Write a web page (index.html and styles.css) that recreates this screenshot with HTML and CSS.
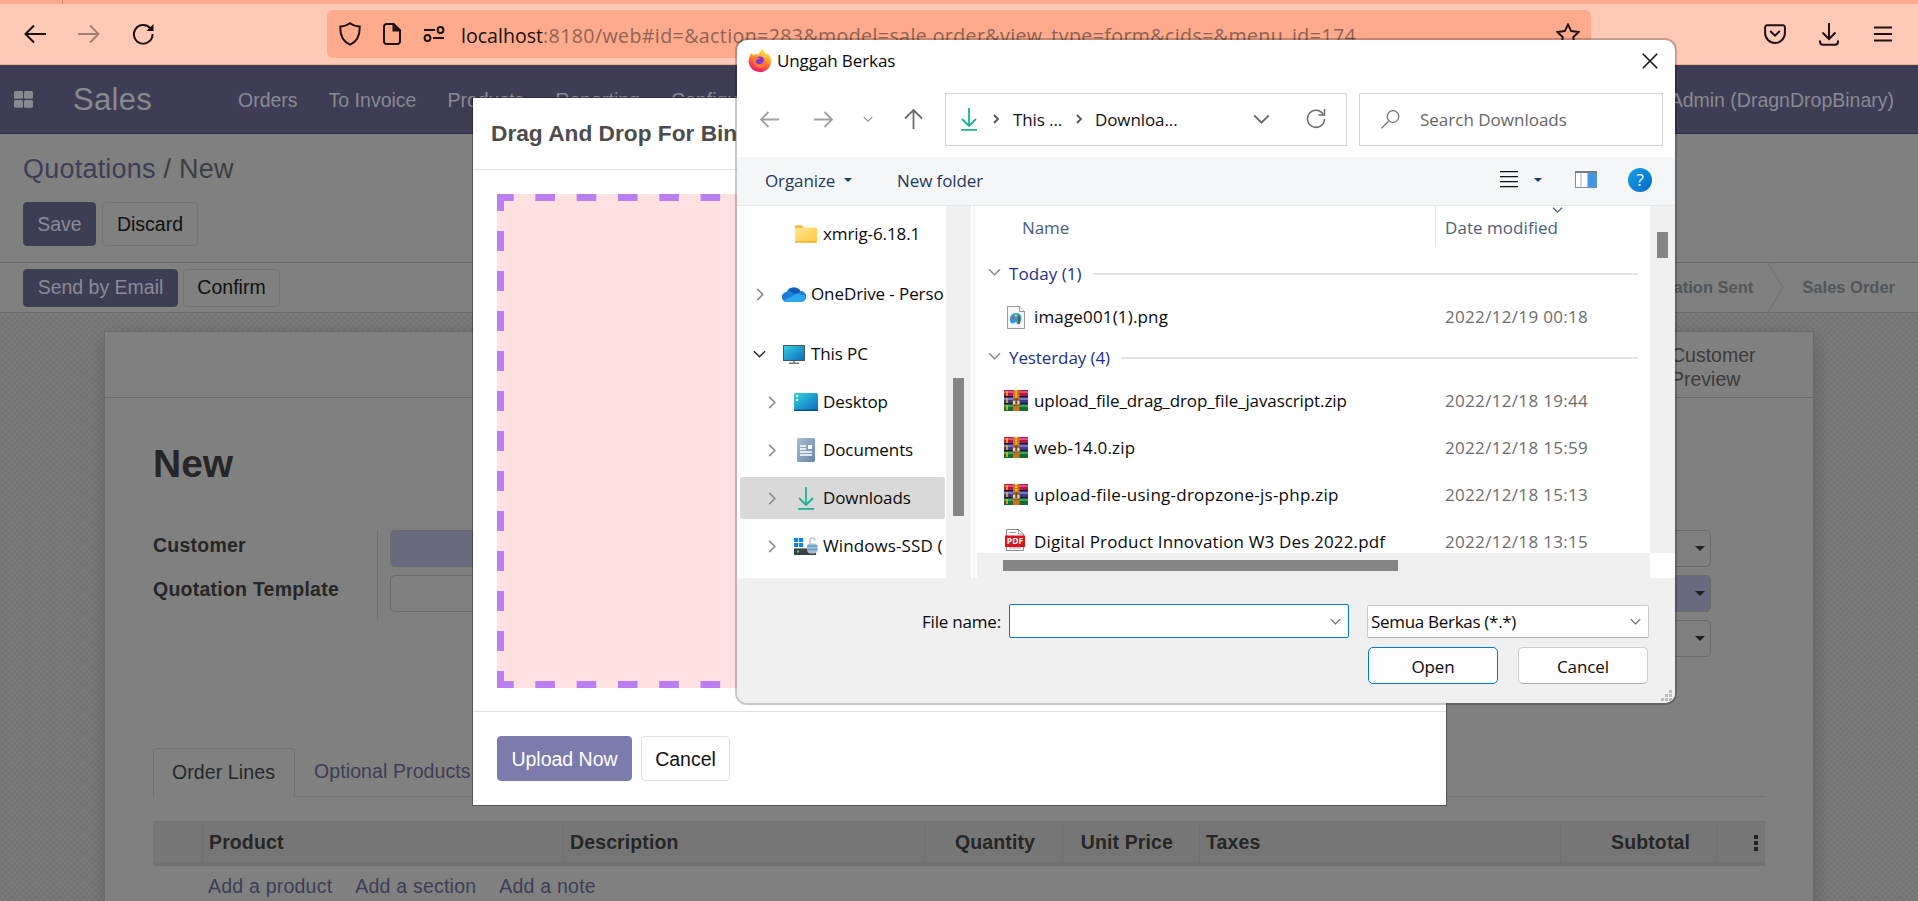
FILE: index.html
```html
<!DOCTYPE html>
<html lang="id">
<head>
<meta charset="utf-8">
<title>Quotations - New</title>
<link rel="stylesheet" href="styles.css">
</head>
<body>
<svg width="0" height="0" class="defs" aria-hidden="true">
  <defs>
    <linearGradient id="gTeal" x1="0" y1="0" x2="1" y2="1"><stop offset="0" stop-color="#35d3e0"/><stop offset="1" stop-color="#0a68bd"/></linearGradient>
    <linearGradient id="gFolder" x1="0" y1="0" x2="1" y2="1"><stop offset="0" stop-color="#ffe591"/><stop offset="1" stop-color="#ffc93c"/></linearGradient>
    <linearGradient id="gDoc" x1="0" y1="0" x2="1" y2="1"><stop offset="0" stop-color="#a9bdd3"/><stop offset="1" stop-color="#6a87a8"/></linearGradient>
    <linearGradient id="gFox" x1="0.75" y1="0" x2="0.35" y2="1"><stop offset="0" stop-color="#fff04a"/><stop offset="0.4" stop-color="#ffa436"/><stop offset="0.65" stop-color="#ff5a36"/><stop offset="1" stop-color="#e8127a"/></linearGradient>
    <symbol id="right" viewBox="0 0 8 14"><path d="M1 1l6 6-6 6" fill="none" stroke="currentColor" stroke-width="1.7"/></symbol>
    <symbol id="down" viewBox="0 0 14 8"><path d="M1 1l6 6 6-6" fill="none" stroke="currentColor" stroke-width="1.5"/></symbol>
    <symbol id="download" viewBox="0 0 16 23"><path d="M8 0v17M1 11l7 7 7-7M0 21.8h16" fill="none" stroke="#1bb394" stroke-width="1.8"/></symbol>
    <symbol id="rar" viewBox="0 0 24 22">
      <rect width="24" height="7" y="0" fill="#b5193f"/><rect width="24" height="2" y="1" fill="#e0527a"/>
      <rect width="24" height="7" y="7" fill="#3b3a8e"/><rect width="24" height="2" y="8" fill="#7b78c8"/>
      <rect width="24" height="7" y="14" fill="#16692f"/><rect width="24" height="2" y="15" fill="#3fa45a"/>
      <path d="M0 6.5h24M0 13.5h24" stroke="#1b1230"/><path d="M3 1v5M3 8v5M3 15v5" stroke="#f0b428" stroke-width="1.6"/>
      <rect x="9" width="6.500" height="21" fill="#c8741a"/><path d="M12.200 0v9" stroke="#ffd34d" stroke-width="2" stroke-dasharray="1.500 1"/>
      <rect x="8.500" y="10" width="7.500" height="5" rx="1" fill="#d9d9d9" stroke="#6b3d1a"/><rect x="11.300" y="8" width="2" height="6" fill="#7b4419"/>
    </symbol>
  </defs>
</svg>
<div class="screen">
  <div class="tabstrip"><i></i></div>
  <div class="browser-bar">
    <svg class="ic back" width="22" height="20" viewBox="0 0 22 20"><path d="M22 10H1.500M10 1.500L1.500 10l8.500 8.500" /></svg>
    <svg class="ic fwd" width="22" height="20" viewBox="0 0 22 20"><path d="M0 10h20.500M12 1.500l8.500 8.500-8.500 8.500"/></svg>
    <svg class="ic reload" width="22" height="22" viewBox="0 0 22 22"><path d="M18 5A9.300 9.300 0 1 0 20.500 11"/><path d="M21.500 1v7h-7z" fill="#1c1310" stroke="none"/></svg>
    <div class="urlbar">
      <svg class="ic shield" width="22" height="24" viewBox="0 0 22 24"><path d="M11 1.200C8 3.500 4.500 4.200 1.300 4.500 1 13 3.500 19.500 11 22.700 18.500 19.500 21 13 20.700 4.500 17.500 4.200 14 3.500 11 1.200z"/></svg>
      <svg class="ic page" width="18" height="22" viewBox="0 0 18 22"><path d="M10.500 1H3.500A2.500 2.500 0 0 0 1 3.500v15A2.500 2.500 0 0 0 3.500 21h11a2.500 2.500 0 0 0 2.500-2.500V7.500z"/><path d="M10.500 1v6.500H17z" fill="#2a1a15"/></svg>
      <svg class="ic sliders" width="22" height="16" viewBox="0 0 22 16"><path d="M1 4h11M10 12h11"/><circle cx="17.500" cy="4" r="2.900"/><circle cx="4.500" cy="12" r="2.900"/></svg>
      <div class="url"><b>localhost</b>:8180/web#id=&amp;action=283&amp;model=sale.order&amp;view_type=form&amp;cids=&amp;menu_id=174</div>
      <svg class="ic star" width="24" height="23" viewBox="0 0 24 23"><path d="M12 1.500l3.200 6.600 7.200 1-5.200 5.100 1.300 7.300-6.500-3.500-6.500 3.500 1.300-7.300L1.600 9.100l7.200-1z"/></svg>
    </div>
    <svg class="ic pocket" width="22" height="20" viewBox="0 0 22 20"><path d="M3 1.300h16a1.900 1.900 0 0 1 1.900 1.900V9a9.900 9.900 0 0 1-19.800 0V3.200A1.900 1.900 0 0 1 3 1.300zM6.200 7l4.800 4.600L15.800 7"/></svg>
    <svg class="ic dl" width="20" height="23" viewBox="0 0 20 23"><path d="M10 0v15.500M3.500 9.500l6.500 6.500 6.500-6.500M1 17.500v1.300A3 3 0 0 0 4 21.800h12a3 3 0 0 0 3-3v-1.300"/></svg>
    <svg class="ic burger" width="18" height="16" viewBox="0 0 18 16"><path d="M0 1.500h18M0 8h18M0 14.500h18"/></svg>
  </div>

  <div class="navbar">
    <svg width="19" height="17" viewBox="0 0 19 17"><g fill="#898992"><rect width="9" height="7.800" rx="1.500"/><rect x="10" width="9" height="7.800" rx="1.500"/><rect y="9" width="9" height="7.800" rx="1.500"/><rect x="10" y="9" width="9" height="7.800" rx="1.500"/></g></svg>
    <span class="brand">Sales</span>
    <span class="menu">Orders</span><span class="menu">To Invoice</span><span class="menu">Products</span><span class="menu">Reporting</span><span class="menu">Configuration</span>
    <span class="user">Admin (DragnDropBinary)</span>
  </div>

  <div class="control">
    <div class="crumbs"><a>Quotations</a> <span>/</span> New</div>
    <div class="buttons"><span class="btn primary save">Save</span><span class="btn discard">Discard</span></div>
  </div>
  <div class="statusbar">
    <span class="btn primary send">Send by Email</span><span class="btn confirm">Confirm</span>
    <div class="states"><span>Quotation</span><span>Quotation Sent</span><svg width="17" height="49" viewBox="0 0 17 49"><path d="M1 0l15 24.500L1 49" fill="none" stroke="#737577" stroke-width="1.500"/></svg><span>Sales Order</span></div>
  </div>

  <div class="form-bg">
    <div class="sheet">
      <div class="button-box"><span>Customer<br>Preview</span></div>
      <h1>New</h1>
      <div class="groups">
        <div class="labels"><b>Customer</b><b>Quotation Template</b></div>
        <div class="fields left"><i class="field req"></i><i class="field"></i></div>
        <div class="fields right"><i class="field"><u></u></i><i class="field req"><u></u></i><i class="field"><u></u></i></div>
      </div>
      <div class="tabs"><span class="tab active">Order Lines</span><span class="tab">Optional Products</span><span class="rest"></span></div>
      <div class="table-head"><span></span><span>Product</span><span>Description</span><span class="num qty">Quantity</span><span class="num price">Unit Price</span><span>Taxes</span><span class="num sub">Subtotal</span><span class="kebab"><i></i><i></i><i></i></span></div>
      <div class="add"><a>Add a product</a><a>Add a section</a><a>Add a note</a></div>
    </div>
  </div>

  <div class="modal">
    <div class="modal-title">Drag And Drop For Binary</div>
    <div class="modal-body"><div class="dropzone"></div></div>
    <div class="modal-foot"><span class="btn bright">Upload Now</span><span class="btn plain">Cancel</span></div>
  </div>

  <div class="dialog">
    <div class="titlebar">
      <svg width="24" height="24" viewBox="0 0 24 24"><path d="M1.500 8C2 6 2.500 5 3.500 4l1 2C6.500 5 8.500 4.800 10.500 5.500 11 3.500 13 1.500 15 0c.3 2.500 2.500 4 4 5.800l.5-1.800c2.800 3 3.900 6 3.800 9A11.400 11.400 0 0 1 .6 13C.5 11 .8 9.500 1.500 8z" fill="url(#gFox)"/><circle cx="12" cy="12.500" r="5" fill="#7a35dc"/><path d="M4.500 9.500c3-2.500 6-1.500 7.500.5-2 0-3.500.8-4.500 2 .5 2.500 2.500 3.500 5 3 3-.6 4-3.500 2.500-6.500 3.500 2 4 7 1 9.500-4.500 3-11 0-11.500-8.500z" fill="#ff7630"/></svg>
      <span class="title">Unggah Berkas</span>
      <svg class="close" width="16" height="16" viewBox="0 0 16 16"><path d="M.8.8l14.400 14.400M15.200.8L.8 15.200" stroke="#111" stroke-width="1.600"/></svg>
    </div>
    <div class="nav">
      <svg class="ar n1" width="19" height="17" viewBox="0 0 19 17"><path d="M19 8.500H1.500M8.500 1L1 8.500 8.500 16"/></svg>
      <svg class="ar n2" width="19" height="17" viewBox="0 0 19 17"><path d="M0 8.500h17.500M10.500 1L18 8.500 10.500 16"/></svg>
      <svg class="ar n3" width="10" height="6"><use href="#down"/></svg>
      <svg class="ar n4" width="19" height="20" viewBox="0 0 19 20"><path d="M9.500 20V1.500M1 9.500l8.500-8.500L18 9.500"/></svg>
      <div class="address">
        <svg class="a1" width="16" height="23"><use href="#download"/></svg>
        <svg class="a2" width="6" height="10" viewBox="0 0 6 10"><path d="M1 1l4 4-4 4" fill="none" stroke="#555" stroke-width="1.900"/></svg><span class="p1">This ...</span>
        <svg class="a2" width="6" height="10" viewBox="0 0 6 10"><path d="M1 1l4 4-4 4" fill="none" stroke="#555" stroke-width="1.900"/></svg><span class="p2">Downloa...</span>
        <svg class="a3" width="17" height="10"><use href="#down"/></svg>
        <svg class="a4" width="20" height="20" viewBox="0 0 20 20"><path d="M17 5A8.500 8.500 0 1 0 18.500 10M18.500 0v6h-6" fill="none" stroke="#6b6b6b" stroke-width="1.500"/></svg>
      </div>
      <div class="search"><svg width="19" height="19" viewBox="0 0 19 19"><circle cx="12" cy="6.500" r="5.800" fill="none" stroke="#777" stroke-width="1.300"/><path d="M8 10.700L.5 18.300" stroke="#777" stroke-width="1.300"/></svg><span>Search Downloads</span></div>
    </div>
    <div class="toolbar">
      <span class="organize">Organize</span><i class="tri t1"></i><span class="newf">New folder</span>
      <svg class="list-ic" width="18" height="17" viewBox="0 0 18 17"><path d="M0 .7h18M0 5.700h18M0 10.700h18M0 15.700h18" stroke="#111" stroke-width="1.200"/></svg>
      <i class="tri t2"></i>
      <svg class="pane" width="22" height="17" viewBox="0 0 22 17"><rect x=".5" y=".5" width="21" height="16" fill="#fff" stroke="#8b8b8b"/><path d="M0 1h22" stroke="#7b7b7b" stroke-width="2"/><path d="M6 2v14" stroke="#aaa"/><rect x="12.500" y="2" width="9" height="14.500" fill="#3d97e4"/></svg>
      <span class="help">?</span>
    </div>
    <div class="content">
      <div class="tree">
        <div class="row lv2"><svg class="ico" width="22" height="18" viewBox="0 0 22 18"><path d="M0 1.500Q0 .5 1 .5h5.500L8.500 2.500V6H0z" fill="#f3a811"/><rect y="2.500" width="22" height="15" rx="1" fill="url(#gFolder)"/><path d="M0 17h22" stroke="#e0a11c"/></svg><span>xmrig-6.18.1</span></div>
        <div class="row tall lv1"><svg class="chev" width="8" height="13"><use href="#right"/></svg><svg class="ico" width="24" height="16" viewBox="0 0 24 16"><path d="M5 16A5 5 0 0 1 4.500 6 8 8 0 0 1 18.500 5 5.500 5.500 0 0 1 19 16z" fill="#1b7fd9"/><path d="M6.500 4.500A7.500 7.500 0 0 1 18.500 5.500L13 8z" fill="#0b5bb0"/><path d="M2 14.500L14 8l8.500 1A5 5 0 0 1 19 16H5q-2 0-3-1.500z" fill="#2ea6ee"/></svg><span>OneDrive - Perso</span></div>
        <div class="row tall lv1 pc"><svg class="chev open" width="13" height="8"><use href="#down"/></svg><svg class="ico" width="22" height="19" viewBox="0 0 22 19"><rect x=".5" y=".5" width="21" height="15" fill="url(#gTeal)" stroke="#47545e"/><path d="M11 16v2M6 18.300h10" stroke="#6d7780" stroke-width="1.500"/></svg><span>This PC</span></div>
        <div class="row lv2"><svg class="chev" width="8" height="13"><use href="#right"/></svg><svg class="ico" width="24" height="18" viewBox="0 0 24 18"><rect width="24" height="18" rx="1.500" fill="url(#gTeal)"/><path d="M2 3h2M2 7h2" stroke="#fff" stroke-width="1.800"/><path d="M0 17.300h24" stroke="#0b4c86" stroke-width="1.400"/></svg><span>Desktop</span></div>
        <div class="row lv2"><svg class="chev" width="8" height="13"><use href="#right"/></svg><svg class="ico" width="18" height="24" viewBox="0 0 18 24"><rect width="18" height="24" rx="1.500" fill="url(#gDoc)"/><path d="M3 8h6M3 11h6M3 14h12M3 17h12" stroke="#fff" stroke-width="1.300"/><rect x="11" y="7" width="4" height="4" fill="#fff"/></svg><span>Documents</span></div>
        <div class="row lv2 sel"><svg class="chev" width="8" height="13"><use href="#right"/></svg><svg class="ico" width="16" height="23"><use href="#download"/></svg><span>Downloads</span></div>
        <div class="row lv2"><svg class="chev" width="8" height="13"><use href="#right"/></svg><svg class="ico up" width="24" height="19" viewBox="0 0 24 19"><path d="M0 1h4.200v4H0zM5 1h4.200v4H5zM0 6h4.200v4H0zM5 6h4.200v4H5z" fill="#0a84dc"/><rect y="11" width="22" height="7" fill="#3b4045"/><path d="M0 11.500h22" stroke="#8d9398"/><rect x="3" y="13.500" width="2" height="2" fill="#49e04d"/><path d="M16 7V3.500a2.500 2.500 0 0 1 5 0" fill="none" stroke="#b9c3ca" stroke-width="1.500"/><rect x="13" y="6.500" width="10.500" height="10" rx="4" fill="#aebdc9"/><path d="M13 9h10.500M13 12.500h10.500" stroke="#4fa4de" stroke-width="1.500"/></svg><span class="ssd">Windows-SSD (</span></div>
      </div>
      <div class="tree-scroll"><i></i></div>
      <div class="files">
        <div class="list">
          <div class="cols"><span class="c-name">Name</span><span class="c-date">Date modified<svg width="11" height="6"><use href="#down"/></svg></span></div>
          <div class="group"><svg width="13" height="8"><use href="#down"/></svg><span>Today (1)</span><hr></div>
          <div class="file first"><svg class="fi" width="18" height="23" viewBox="0 0 18 23"><path d="M.5.5h12l5 5v17H.5z" fill="#f6f7f8" stroke="#9a9a9a"/><path d="M12.500.5v5h5" fill="#fff" stroke="#9a9a9a"/><path d="M3 15c-1-5 3-8.500 7-8 4 .5 5 4 4 8-1 3-3 4-4 3 0-2-2-2-3-1s-3 1-4-2z" fill="#2b9fdd"/><circle cx="6" cy="12" r="1.200" fill="#e6452e"/><circle cx="9" cy="9.500" r="1.200" fill="#f3cb2f"/><path d="M12 10v8" stroke="#8a4b22" stroke-width="1.700"/></svg><span class="w1">image001(1).png</span><time>2022/12/19 00:18</time></div>
          <div class="group g2"><svg width="13" height="8"><use href="#down"/></svg><span>Yesterday (4)</span><hr></div>
          <div class="file"><svg class="fi" width="24" height="22"><use href="#rar"/></svg><span>upload_file_drag_drop_file_javascript.zip</span><time>2022/12/18 19:44</time></div>
          <div class="file"><svg class="fi" width="24" height="22"><use href="#rar"/></svg><span class="w1">web-14.0.zip</span><time>2022/12/18 15:59</time></div>
          <div class="file"><svg class="fi" width="24" height="22"><use href="#rar"/></svg><span class="w2">upload-file-using-dropzone-js-php.zip</span><time>2022/12/18 15:13</time></div>
          <div class="file"><svg class="fi pdf" width="20" height="22" viewBox="0 0 20 22"><path d="M1.500.5h12l5 4.500v16.500h-17z" fill="#fff" stroke="#8a8a8a"/><path d="M13.500.5V5h5M4 3.500h7M4 19h12" fill="none" stroke="#9a9a9a"/><rect y="6.500" width="20" height="11.500" fill="#d8121f"/><text x="10" y="15.300" text-anchor="middle" class="pdf-t">PDF</text></svg><span class="w1">Digital Product Innovation W3 Des 2022.pdf</span><time>2022/12/18 13:15</time></div>
        </div>
        <div class="vscroll"><i></i></div>
        <div class="hscroll"><i></i></div>
        <div class="corner"></div>
      </div>
    </div>
    <div class="footer">
      <div class="frow"><span class="fname">File name:</span><div class="input"><svg width="11" height="7"><use href="#down"/></svg></div><div class="select"><span>Semua Berkas (*.*)</span><svg width="11" height="7"><use href="#down"/></svg></div></div>
      <div class="brow"><span class="wbtn def">Open</span><span class="wbtn">Cancel</span></div>
      <svg class="grip" width="12" height="12" viewBox="0 0 12 12"><path d="M8 0h3v3H8zM4 4h3v3H4zM8 4h3v3H8zM0 8h3v3H0zM4 8h3v3H4zM8 8h3v3H8z" fill="#bdbdbd"/></svg>
    </div>
  </div>
</div>
</body>
</html>
```
FILE: styles.css
```css
* { box-sizing: border-box; }
body { margin: 0; font: 19.5px "Liberation Sans", Arial, sans-serif; color: #262626; }
.defs { position: absolute; }
svg { display: block; flex: none; }
.screen { position: relative; width: 1918px; height: 901px; overflow: hidden; display: flex; flex-direction: column; background: #7a7a7a; }

/* browser chrome */
.tabstrip { height: 4px; flex: none; background: #ffaa8d; padding-left: 62px; }
.tabstrip i { display: block; width: 1px; height: 4px; background: #d98872; }
.browser-bar { height: 61px; flex: none; background: #ffc9b7; border-bottom: 1px solid #ffaa8d; display: flex; align-items: center; padding-left: 24px; }
.ic { fill: none; stroke: #1c1310; stroke-width: 2; }
.fwd { margin-left: 32px; opacity: .4; }
.reload { margin-left: 32px; }
.urlbar { margin-left: 173px; width: 1264px; height: 48px; background: #ffaa8d; border-radius: 6px; display: flex; align-items: center; padding-left: 12px; }
.page { margin-left: 22px; }
.sliders { margin-left: 22px; }
.url { margin-left: 16px; width: 1092px; font: 19.6px/30px "Open Sans", "Noto Sans", sans-serif; letter-spacing: .38px; color: #8f6354; white-space: nowrap; padding-top: 4px; }
.url b { font-weight: 400; letter-spacing: 0; color: #15100e; }
.star { margin-left: 3px; }
.pocket { margin-left: 173px; }
.dl { margin-left: 33px; }
.burger { margin-left: 35px; }

/* application header */
.navbar { height: 69px; flex: none; background: #3e3d55; border-bottom: 1px solid #2e2d4c; display: flex; align-items: center; padding: 0 24px 0 14px; color: #898992; white-space: nowrap; }
.brand { font-size: 31px; margin-left: 40px; width: 165px; letter-spacing: .3px; padding-top: 1px; }
.menu { margin-right: 31px; padding-top: 2px; }
.user { margin-left: auto; padding-top: 2px; }
.control { height: 129px; flex: none; background: #808080; border-bottom: 1px solid #6a6a6a; padding: 19px 23px 0; }
.crumbs { font-size: 27px; line-height: 32px; color: #3d3e40; height: 49px; letter-spacing: .22px; }
.crumbs a { color: #3e3d56; }
.buttons { display: flex; gap: 6px; }
.btn { height: 44px; border: 1px solid #717375; border-radius: 4px; display: flex; align-items: center; justify-content: center; color: #101010; white-space: nowrap; }
.save { width: 73px; }
.discard { width: 96px; }
.send { width: 155px; }
.confirm { width: 97px; }
.btn.primary { background: #3e3d56; border-color: #3e3d56; color: #8b8b96; }
.statusbar { height: 50px; flex: none; background: #808080; border-bottom: 1px solid #6a6a6a; display: flex; align-items: center; padding: 0 23px; gap: 5px; }
.statusbar .btn { height: 38px; }
.states { margin-left: auto; display: flex; align-items: center; font: bold 16.5px "Liberation Sans", Arial, sans-serif; color: #535659; }
.states span { margin-left: 18px; }
.states svg { margin-left: 14px; }
.states span:first-child { margin-right: 34px; }

/* form */
.form-bg { flex: 1; padding: 18px 104px 0; background: repeating-linear-gradient(45deg, #0000 0 2.120px, #00000008 2.120px 4.240px), repeating-linear-gradient(-45deg, #7b7b7b 0 2.120px, #777 2.120px 4.240px); overflow: hidden; }
.sheet { height: 620px; background: #808080; border: 1px solid #6a6a6a; box-shadow: 0 5px 20px -5px #0005; }
.button-box { height: 66px; border-bottom: 1px solid #6a6a6a; padding: 11px 0 0 1566px; line-height: 24px; color: #3b3b3b; }
.sheet h1 { margin: 46px 0 0 48px; font-size: 39px; line-height: 40px; height: 86px; color: #262626; }
.groups { display: flex; padding-left: 48px; height: 218px; }
.labels { width: 225px; height: 90px; border-right: 1px solid #6f6f6f; display: flex; flex-direction: column; line-height: 30px; gap: 14px; white-space: nowrap; letter-spacing: .24px; }
.fields { display: flex; flex-direction: column; gap: 8px; margin-left: 12px; }
.fields.left { width: 400px; }
.fields.right { width: 451px; margin-left: 470px; }
.field { height: 37px; border: 1px solid #6a6a6a; border-radius: 5px; display: flex; align-items: center; justify-content: flex-end; padding-right: 5px; }
.field.req { background: #69697f; }
.field u { border: 5.500px solid transparent; border-top: 5.500px solid #202020; border-bottom: 0; }
.tabs { display: flex; margin: 0 48px; height: 49px; }
.tab { padding: 0 19px 1px; border-bottom: 1px solid #6f7072; display: flex; align-items: center; color: #3e3d56; white-space: nowrap; letter-spacing: .1px; }
.tab.active { width: 142px; padding-left: 18px; border: 1px solid #6f7072; border-bottom: 0; border-radius: 5px 5px 0 0; color: #24282b; }
.rest { flex: 1; border-bottom: 1px solid #6f7072; }
.table-head { margin: 24px 48px 0; height: 45px; display: grid; grid-template-columns: 50px 361px 361px 138px 137px 361px 156px 48px; background: #767676; border-top: 1px solid #6f7072; border-bottom: 4px solid #6f7173; font-weight: 700; letter-spacing: .12px; }
.table-head span { border-right: 1px solid #6d6f70; padding-left: 6px; line-height: 41px; white-space: nowrap; }
.table-head .num { text-align: right; padding-right: 26px; }
.table-head .qty { padding-right: 27px; }
.table-head .kebab { border: 0; display: flex; flex-direction: column; gap: 2px; align-items: flex-end; justify-content: center; padding-right: 7px; }
.kebab i { width: 4px; height: 4px; background: #222; }
.add { display: flex; gap: 23px; padding: 10px 0 0 103px; line-height: 21px; color: #3e3d56; letter-spacing: .22px; }

/* upload modal */
.modal { position: absolute; left: 473px; top: 98px; width: 973px; height: 707px; background: #fff; outline: 1px solid #00000055; }
.modal-title { height: 72px; border-bottom: 1px solid #dee2e6; padding-left: 18px; font: bold 22.7px/71px "Liberation Sans", Arial, sans-serif; color: #4c4c4c; }
.modal-body { padding: 24px 24px 23px; height: 542px; border-bottom: 1px solid #dee2e6; }
.dropzone { height: 494px; background:
  repeating-linear-gradient(90deg, #bb7ef0 0 17px, #0000 17px 38px, #bb7ef0 38px 41.300px) 0 0 / 41.300px 7px repeat-x,
  repeating-linear-gradient(90deg, #bb7ef0 0 17px, #0000 17px 38px, #bb7ef0 38px 41.300px) 0 100% / 41.300px 7px repeat-x,
  linear-gradient(180deg, #bb7ef0 0 17px, #0000 17px 37px, #bb7ef0 37px 40px) 0 0 / 7px 40px repeat-y,
  linear-gradient(180deg, #bb7ef0 0 17px, #0000 17px 37px, #bb7ef0 37px 40px) 100% 0 / 7px 40px repeat-y, #ffe1e1; }
.modal-foot { display: flex; gap: 9px; padding: 24px; }
.modal-foot .btn { height: 45px; padding-top: 2px; }
.btn.bright { width: 135px; background: #7c7bad; border-color: #7c7bad; color: #fff; }
.btn.plain { width: 89px; border-color: #dee2e6; color: #111; }

/* file picker */
.dialog { position: absolute; left: 737px; top: 40px; width: 938px; height: 663px; background: #fff; border-radius: 10px; box-shadow: 0 0 0 2px #00000038; display: flex; flex-direction: column; overflow: hidden; font: 17px/24px "Open Sans", "Noto Sans", sans-serif; color: #0a0a0a; white-space: nowrap; letter-spacing: -.1px; }
.titlebar { height: 44px; display: flex; align-items: center; padding: 0 17px 3px 11px; }
.titlebar .title { margin-left: 5px; padding-top: 1px; }
.close { margin-left: auto; }
.nav { height: 73px; display: flex; align-items: center; padding: 0 0 3px 23px; }
.ar { fill: none; stroke: #a0a0a0; stroke-width: 1.800; color: #909090; }
.n2 { margin-left: 35px; }
.n3 { margin-left: 30px; }
.n4 { margin-left: 31px; stroke: #6b6b6b; }
.address { margin-left: 22px; width: 402px; height: 53px; border: 1px solid #d5d5d5; display: flex; align-items: center; padding-left: 15px; color: #111; }
.address span { padding-top: 1px; }
.a2 { margin-left: 16px; }
.p1 { margin-left: 14px; width: 47px; }
.p2 { margin-left: 13px; width: 159px; }
.a3 { color: #666; margin-left: -1px; }
.a4 { margin-left: 36px; }
.search { margin-left: 12px; width: 304px; height: 53px; border: 1px solid #d5d5d5; display: flex; align-items: center; padding-left: 21px; color: #666; }
.search span { margin-left: 20px; padding-top: 2px; letter-spacing: 0; }
.toolbar { height: 49px; flex: none; background: #f5f6f8; border-bottom: 1px solid #e5e8eb; display: flex; align-items: center; padding: 0 23px 3px 28px; color: #1e395b; }
.toolbar .organize, .toolbar .newf { padding-top: 3px; }
.tri { border: 4px solid transparent; border-top: 4.500px solid #1e395b; border-bottom: 0; }
.organize { width: 71px; }
.t1 { margin-left: 8px; }
.newf { margin-left: 45px; width: 603px; }
.t2 { margin-left: 16px; }
.pane { margin-left: 33px; }
.help { margin-left: auto; width: 24px; height: 24px; border-radius: 50%; background: linear-gradient(135deg, #1ba1e6, #0069c8); color: #fff; text-align: center; font-size: 17px; line-height: 24px; }
.content { height: 372px; flex: none; display: flex; }
.tree { width: 209px; padding: 4px 0 0 3px; overflow: hidden; }
.tree .row { height: 48px; display: grid; grid-template-columns: 34px 37px 133px; align-items: center; width: 205px; overflow: hidden; }
.tree .row.lv2 { grid-template-columns: 45px 38px 121px; }
.row .chev { grid-column: 1; justify-self: center; color: #8a8a8a; }
.row.lv2 .chev { margin-left: 18px; }
.row.tall .chev { margin-left: 5px; }
.row .chev.open { color: #222; }
.row .ico { grid-column: 2; justify-self: center; }
.row.lv2 .ico { margin-left: 4px; }
.row span { grid-column: 3; padding-bottom: 1px; }
.row .ssd { letter-spacing: .1px; }
.tree .row.tall { height: 60px; padding-top: 12px; }
.row.tall .ico { margin-left: 3px; }
.tree .row.sel { height: 42px; margin: 3px 0; background: #d9d9d9; border-radius: 3px; }
.tree-scroll { width: 25px; background: #f0f0f0; padding: 172px 0 0 7px; }
.tree-scroll i { display: block; width: 11px; height: 138px; background: #858585; }
.files { flex: 1; margin-left: 2px; border-left: 2px solid #f5f5f5; display: grid; grid-template: 347px 25px / 675px 25px; }
.list { overflow: hidden; }
.cols { height: 41px; display: flex; color: #4c607a; line-height: 43px; }
.c-name { padding-left: 47px; width: 461px; border-right: 1px solid #e5e5e5; }
.c-date { padding-left: 9px; position: relative; letter-spacing: .05px; }
.c-date svg { position: absolute; right: -5px; top: 1px; }
.group { height: 54px; display: flex; align-items: center; padding: 0 12px 0 13px; color: #1c2f8a; }
.group svg { color: #888; margin-bottom: 4px; }
.group span { margin: 0 11px 0 8px; letter-spacing: .05px; }
.group hr { flex: 1; height: 2px; margin: 0; border: 0; background: #e4e4e4; }
.group.g2 { height: 37px; }
.g2 span { letter-spacing: -.1px; }
.file { height: 47px; display: grid; grid-template-columns: 59px 411px 180px; align-items: center; }
.file.first { height: 32px; }
.group + .file:not(.first) { margin-top: 1px; }
.group.g2 { margin-top: 6px; }
.w1 { letter-spacing: .16px; }
.w2 { letter-spacing: .24px; }
.fi { justify-self: center; margin-left: 23px; }
.fi.pdf { margin-left: 20px; margin-bottom: 3px; }
.pdf-t { font: bold 8.500px "Open Sans", sans-serif; fill: #fff; letter-spacing: 0; }
.file time { color: #6d6d6d; letter-spacing: .32px; }
.vscroll { background: #f0f0f0; padding: 26px 0 0 7px; }
.vscroll i { display: block; width: 11px; height: 26px; background: #858585; }
.hscroll { background: #efefef; margin-left: 2px; padding: 7px 0 0 26px; }
.hscroll i { display: block; width: 395px; height: 11px; background: #858585; }
.footer { flex: 1; background: #f0f0f0; position: relative; padding-top: 26px; }
.frow { display: flex; align-items: center; padding-left: 185px; height: 34px; }
.fname { width: 78px; padding-top: 2px; letter-spacing: -.2px; }
.input { margin-left: 9px; width: 340px; height: 34px; border: 1px solid #0078d4; background: #fff; border-radius: 2px; display: flex; align-items: center; justify-content: flex-end; padding-right: 7px; color: #666; }
.select { margin-left: 18px; width: 282px; height: 33px; border: 1px solid #ccc; border-bottom-color: #aaa; background: #fdfdfd; border-radius: 2px; display: flex; align-items: center; justify-content: space-between; padding: 0 7px 0 3px; }
.select span { padding-top: 2px; letter-spacing: -.3px; }
.select svg { color: #666; }
.brow { display: flex; gap: 20px; padding: 9px 0 0 631px; }
.wbtn { width: 130px; height: 37px; border: 1px solid #ccc; border-bottom-color: #aaa; border-radius: 5px; background: #fdfdfd; display: flex; align-items: center; justify-content: center; padding-top: 2px; }
.wbtn.def { border-color: #0078d4; }
.grip { position: absolute; right: 2px; bottom: 1px; }
```
